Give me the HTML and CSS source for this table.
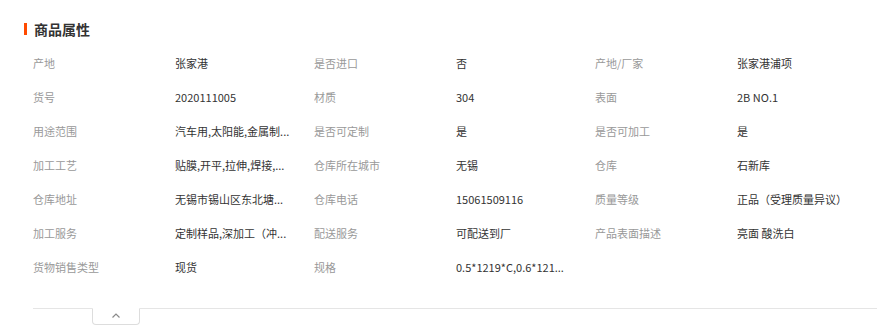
FILE: index.html
```html
<!DOCTYPE html>
<html lang="zh-CN">
<head>
<meta charset="utf-8">
<link rel="stylesheet" href="styles.css">
</head>
<body>
<div class="panel">
  <h2 class="title"><span class="mark"></span>商品属性</h2>
  <div class="grid">
    <div class="k">产地</div><div class="v">张家港</div>
    <div class="k">是否进口</div><div class="v">否</div>
    <div class="k">产地/厂家</div><div class="v">张家港浦项</div>

    <div class="k">货号</div><div class="v">2020111005</div>
    <div class="k">材质</div><div class="v">304</div>
    <div class="k">表面</div><div class="v">2B NO.1</div>

    <div class="k">用途范围</div><div class="v">汽车用,太阳能,金属制...</div>
    <div class="k">是否可定制</div><div class="v">是</div>
    <div class="k">是否可加工</div><div class="v">是</div>

    <div class="k">加工工艺</div><div class="v">贴膜,开平,拉伸,焊接,...</div>
    <div class="k">仓库所在城市</div><div class="v">无锡</div>
    <div class="k">仓库</div><div class="v">石新库</div>

    <div class="k">仓库地址</div><div class="v">无锡市锡山区东北塘...</div>
    <div class="k">仓库电话</div><div class="v">15061509116</div>
    <div class="k">质量等级</div><div class="v">正品（受理质量异议）</div>

    <div class="k">加工服务</div><div class="v">定制样品,深加工（冲...</div>
    <div class="k">配送服务</div><div class="v">可配送到厂</div>
    <div class="k">产品表面描述</div><div class="v">亮面 酸洗白</div>

    <div class="k">货物销售类型</div><div class="v">现货</div>
    <div class="k">规格</div><div class="v">0.5*1219*C,0.6*121...</div>
    <div class="k"></div><div class="v"></div>
  </div>
  <div class="foot">
    <div class="tab">
      <svg width="10" height="6" viewBox="0 0 10 6"><path d="M1.5 5.5 L5 2 L8.5 5.5" fill="none" stroke="#8a8a8a" stroke-width="1.2"/></svg>
    </div>
  </div>
</div>
</body>
</html>
```

FILE: styles.css
```css
html, body {
  margin: 0;
  padding: 0;
  background: #fff;
}
body {
  font-family: "Noto Sans CJK SC", "Noto Sans", sans-serif;
  font-size: 11px;
  color: #333;
}
.panel {
  padding: 19px 14px 0 24px;
}
.title {
  display: flex;
  align-items: center;
  gap: 7px;
  margin: 0;
  height: 20px;
  font-size: 14px;
  font-weight: bold;
  color: #333;
}
.mark {
  display: inline-block;
  width: 3px;
  height: 12px;
  background: #ff4a00;
}
.grid {
  display: grid;
  grid-template-columns: 142px 139px 142px 139px 142px 139px;
  margin: 7px 0 0 9px;
}
.k, .v {
  height: 34px;
  line-height: 34px;
  white-space: nowrap;
  overflow: hidden;
}
.k {
  color: #999;
}
.v {
  color: #333;
}
.foot {
  margin: 24px 0 0 9px;
  border-top: 1px solid #e5e5e5;
  height: 20px;
}
.tab {
  margin: -1px 0 0 59px;
  width: 48px;
  height: 17px;
  border: 1px solid #ddd;
  border-top: 1px solid #fff;
  border-radius: 0 0 4px 4px;
  background: #fff;
  display: flex;
  justify-content: center;
  padding-top: 3px;
  box-sizing: border-box;
}
.tab svg {
  display: block;
}
```
